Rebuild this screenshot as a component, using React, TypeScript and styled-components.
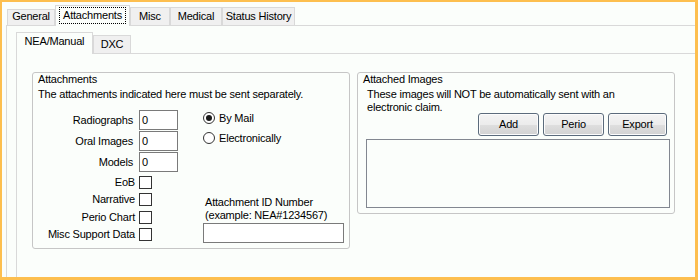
import styled, { createGlobalStyle } from 'styled-components'

const PAGE = '#fbfefb'
const TAB_LINE = '#d9d9d9'

const GlobalStyle = createGlobalStyle`
  body {
    margin: 0;
    background: ${PAGE};
    font-family: 'Liberation Sans', Arial, sans-serif;
    font-size: 11px;
    letter-spacing: -0.2px;
    color: #000;
  }
`

const Frame = styled.div`
  width: 698px;
  height: 280px;
  box-sizing: border-box;
  border-style: solid;
  border-color: #fdbf4f;
  border-width: 2px 3px 3px 2px;
  background: ${PAGE};
  overflow: hidden;
  display: flex;
  flex-direction: column;
  padding: 3px 0 0 4px;
`

const TabStrip = styled.div<{ $height: number; $indent: number }>`
  display: flex;
  align-items: flex-end;
  height: ${({ $height }) => $height}px;
  padding-left: ${({ $indent }) => $indent}px;
  flex-shrink: 0;
`

const Tab = styled.div<{ $width: number; $height: number; $active?: boolean; $pad?: number }>`
  box-sizing: border-box;
  width: ${({ $width }) => $width}px;
  height: ${({ $height }) => $height}px;
  border: 1px solid ${TAB_LINE};
  border-bottom: none;
  background: ${({ $active }) => ($active ? PAGE : '#f0f0f0')};
  margin-bottom: ${({ $active }) => ($active ? -1 : 0)}px;
  position: ${({ $active }) => ($active ? 'relative' : 'static')};
  z-index: ${({ $active }) => ($active ? 1 : 0)};
  display: flex;
  justify-content: center;
  align-items: flex-start;
  padding-top: ${({ $pad }) => ($pad === undefined ? 2 : $pad)}px;
  line-height: 13px;
  white-space: nowrap;
`

const FocusRing = styled.span`
  outline: 1px dotted #000;
  outline-offset: 1px;
  padding: 0 2px;
  margin-top: 1px;
`

const TabPane = styled.div`
  flex: 1;
  display: flex;
  flex-direction: column;
  border-top: 1px solid ${TAB_LINE};
  border-left: 1px solid ${TAB_LINE};
  padding: 6px 0 0 9px;
`

const SubPane = styled.div`
  flex: 1;
  border-top: 1px solid ${TAB_LINE};
  border-left: 1px solid ${TAB_LINE};
  padding: 18px 0 0 15px;
`

const GroupRow = styled.div`
  display: flex;
  align-items: flex-start;
  gap: 7px;
`

const GroupBox = styled.div<{ $height: number }>`
  box-sizing: border-box;
  width: 318px;
  height: ${({ $height }) => $height}px;
  border: 1px solid #c6c6c6;
  border-radius: 3px;
  padding: 0 4px 0 5px;
  display: flex;
  flex-direction: column;
  line-height: 13px;
`

const GroupTitle = styled.div``

const GroupNote = styled.div<{ $indent?: number }>`
  margin-top: 2px;
  margin-left: ${({ $indent }) => $indent || 0}px;
`

const AttachBody = styled.div`
  display: flex;
  gap: 25px;
  margin-top: 9px;
`

const FieldColumn = styled.div`
  display: flex;
  flex-direction: column;
`

const FieldRow = styled.div`
  display: flex;
  align-items: center;
  height: 20px;
  margin-bottom: 1px;
`

const FieldLabel = styled.span<{ $width: number }>`
  width: ${({ $width }) => $width}px;
  text-align: right;
  white-space: nowrap;
`

const TextBox = styled.div<{ $width: number }>`
  box-sizing: border-box;
  width: ${({ $width }) => $width}px;
  height: 20px;
  border: 1px solid #7a7a7a;
  background: #fff;
  padding: 3px 0 0 2px;
  margin-left: 6px;
`

const CheckList = styled.div`
  display: flex;
  flex-direction: column;
  gap: 4.33px;
  margin-top: 3px;
`

const CheckRow = styled.div`
  display: flex;
  align-items: center;
  height: 13px;
`

const CheckBox = styled.span`
  box-sizing: border-box;
  width: 13px;
  height: 13px;
  border: 1px solid #333;
  background: #fff;
  margin-left: 4px;
`

const OptionColumn = styled.div`
  display: flex;
  flex-direction: column;
`

const RadioRow = styled.label`
  display: flex;
  align-items: center;
  height: 16px;
  margin-bottom: 4px;
  gap: 4px;
`

const RadioDot = styled.span<{ $checked?: boolean }>`
  box-sizing: border-box;
  width: 12px;
  height: 12px;
  border-radius: 50%;
  border: 1px solid #333;
  background: #fff;
  display: flex;
  align-items: center;
  justify-content: center;

  &::after {
    content: '';
    width: 6px;
    height: 6px;
    border-radius: 50%;
    background: ${({ $checked }) => ($checked ? '#1a1a1a' : 'transparent')};
  }
`

const IdCaption = styled.div`
  margin-top: auto;
  margin-left: 2px;
`

const IdInput = styled.div`
  box-sizing: border-box;
  width: 141px;
  height: 20px;
  border: 1px solid #7a7a7a;
  background: #fff;
  margin: 1px 0 -2px;
`

const ButtonBar = styled.div`
  display: flex;
  justify-content: flex-end;
  gap: 4px;
  margin: -1px 3px 0 0;
`

const PushButton = styled.button<{ $width: number }>`
  box-sizing: border-box;
  width: ${({ $width }) => $width}px;
  height: 23px;
  border: 1px solid #5b6b7c;
  border-radius: 3px;
  background: linear-gradient(#f4f4f4 0%, #ececec 50%, #dfdfdf 51%, #d2d2d2 100%);
  box-shadow: inset 0 0 0 1px #fcfcfc;
  font: inherit;
  letter-spacing: inherit;
  color: #000;
  padding: 0;
`

const ListBox = styled.div`
  height: 69px;
  box-sizing: border-box;
  margin: 3px 0 0 3px;
  border: 1px solid #828790;
  background: ${PAGE};
`

const fields = ['Radiographs', 'Oral Images', 'Models']
const checks = ['EoB', 'Narrative', 'Perio Chart', 'Misc Support Data']

export default function App() {
  return (
    <>
      <GlobalStyle />
      <Frame>
        <TabStrip $height={20} $indent={1}>
          <Tab $width={48} $height={16} $pad={0}>General</Tab>
          <Tab $width={75} $height={21} $active>
            <FocusRing>Attachments</FocusRing>
          </Tab>
          <Tab $width={40} $height={18}>Misc</Tab>
          <Tab $width={52} $height={18}>Medical</Tab>
          <Tab $width={73} $height={18}>Status History</Tab>
        </TabStrip>
        <TabPane>
          <TabStrip $height={21} $indent={0}>
            <Tab $width={77} $height={22} $active>NEA/Manual</Tab>
            <Tab $width={38} $height={18}>DXC</Tab>
          </TabStrip>
          <SubPane>
            <GroupRow>
              <GroupBox $height={177}>
                <GroupTitle>Attachments</GroupTitle>
                <GroupNote>The attachments indicated here must be sent separately.</GroupNote>
                <AttachBody>
                  <FieldColumn>
                    {fields.map((f) => (
                      <FieldRow key={f}>
                        <FieldLabel $width={95}>{f}</FieldLabel>
                        <TextBox $width={39}>0</TextBox>
                      </FieldRow>
                    ))}
                    <CheckList>
                      {checks.map((c) => (
                        <CheckRow key={c}>
                          <FieldLabel $width={97}>{c}</FieldLabel>
                          <CheckBox />
                        </CheckRow>
                      ))}
                    </CheckList>
                  </FieldColumn>
                  <OptionColumn>
                    <RadioRow>
                      <RadioDot $checked />
                      By Mail
                    </RadioRow>
                    <RadioRow>
                      <RadioDot />
                      Electronically
                    </RadioRow>
                    <IdCaption>
                      Attachment ID Number
                      <br />
                      (example: NEA#1234567)
                    </IdCaption>
                    <IdInput />
                  </OptionColumn>
                </AttachBody>
              </GroupBox>
              <GroupBox $height={142}>
                <GroupTitle>Attached Images</GroupTitle>
                <GroupNote $indent={4}>
                  These images will NOT be automatically sent with an
                  <br />
                  electronic claim.
                </GroupNote>
                <ButtonBar>
                  <PushButton $width={61}>Add</PushButton>
                  <PushButton $width={61}>Perio</PushButton>
                  <PushButton $width={59}>Export</PushButton>
                </ButtonBar>
                <ListBox />
              </GroupBox>
            </GroupRow>
          </SubPane>
        </TabPane>
      </Frame>
    </>
  )
}
